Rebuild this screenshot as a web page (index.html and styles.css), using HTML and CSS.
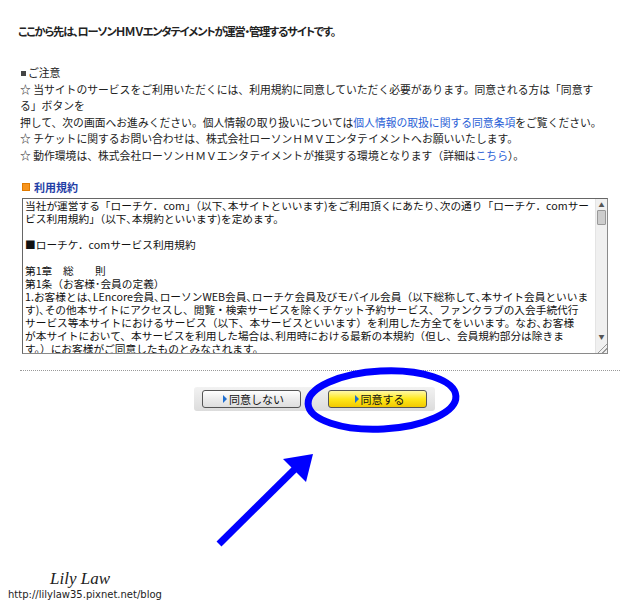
FILE: index.html
```html
<!DOCTYPE html>
<html>
  <head>
    <meta charset="utf-8">
    <title>ローチケ．com 利用規約</title>
    <link rel="stylesheet" href="styles.css">
  </head>
  <body>
    <div class="page">
      <p class="lead">ここから先は、ローソンＨＭＶエンタテイメントが運営・管理するサイトです。</p>

      <div class="notice">
        <div class="notice-title"><span class="sq"></span>ご注意</div>
        <div>☆ 当サイトのサービスをご利用いただくには、利用規約に同意していただく必要があります。同意される方は「同意す</div>
        <div>る」ボタンを</div>
        <div>押して、次の画面へお進みください。個人情報の取り扱いについては<a href="#">個人情報の取扱に関する同意条項</a>をご覧ください。</div>
        <div>☆ チケットに関するお問い合わせは、株式会社ローソンＨＭＶエンタテイメントへお願いいたします。</div>
        <div>☆ 動作環境は、株式会社ローソンＨＭＶエンタテイメントが推奨する環境となります（詳細は<a href="#">こちら</a>）。</div>
      </div>

      <h3 class="terms-title"><span class="mark"></span>利用規約</h3>

      <div class="terms-box">
        <div class="terms-text">当社が運営する「ローチケ．com」（以下､本サイトといいます)をご利用頂くにあたり､次の通り「ローチケ．comサー
ビス利用規約」（以下､本規約といいます)を定めます。

■ローチケ．comサービス利用規約

第1章　総　　則
第1条（お客様･会員の定義）
1.お客様とは､LEncore会員､ローソンWEB会員､ローチケ会員及びモバイル会員（以下総称して､本サイト会員といいま
す)､その他本サイトにアクセスし、閲覧・検索サービスを除くチケット予約サービス、ファンクラブの入会手続代行
サービス等本サイトにおけるサービス（以下、本サービスといいます）を利用した方全てをいいます。なお､お客様
が本サイトにおいて、本サービスを利用した場合は､利用時における最新の本規約（但し、会員規約部分は除きま
す。）にお客様がご同意したものとみなされます。</div>
        <div class="scrollbar">
          <span class="sb-btn">▲</span>
          <span class="sb-thumb"></span>
          <span class="sb-track"></span>
          <span class="sb-btn">▼</span>
          <span class="sb-grip"></span>
        </div>
      </div>

      <hr class="dots">

      <div class="actions">
        <div class="btn-panel">
          <button class="btn">同意しない</button>
          <button class="btn btn-agree">同意する</button>
        </div>
      </div>
    </div>

    <svg class="marks" width="640" height="613" viewBox="0 0 640 613">
      <ellipse cx="382" cy="400" rx="74" ry="29" fill="none" stroke="#0000ff" stroke-width="7" transform="rotate(-3 382 400)"/>
      <line x1="219" y1="544" x2="302" y2="462" stroke="#0000ff" stroke-width="7"/>
      <polygon points="313,454 283,459 306,482" fill="#0000ff"/>
    </svg>

    <div class="credit">
      <div class="credit-name">Lily Law</div>
      <div class="credit-url">http://lilylaw35.pixnet.net/blog</div>
    </div>
  </body>
</html>
```

FILE: styles.css
```css
:root {
  --text: #222;
  --link: #2a5fd6;
  --navy: #1f3ea6;
  --jp: "Noto Sans CJK JP", "Noto Sans", sans-serif;
}

html,
body {
  margin: 0;
  padding: 0;
  background: #fff;
}

body {
  font-family: var(--jp);
  color: var(--text);
  width: 640px;
  height: 613px;
  position: relative;
  overflow: hidden;
}

.page {
  padding: 22px 20px 0 18px;
}

.lead {
  margin: 0;
  font-size: 11.2px;
  line-height: 18px;
  font-weight: 700;
  font-feature-settings: "palt";
  letter-spacing: -1.15px;
}

.notice {
  margin-top: 24px;
  padding-left: 2px;
  font-size: 10.8px;
  line-height: 16.6px;
  white-space: nowrap;
}

.notice-title .sq {
  display: inline-block;
  width: 5px;
  height: 5px;
  background: #444;
  margin: 0 2px 1px 1px;
  vertical-align: middle;
}

.notice a {
  color: var(--link);
  text-decoration: none;
}

.terms-title {
  margin: 15px 0 0 4px;
  font-size: 11px;
  line-height: 16px;
  color: var(--navy);
  font-weight: 700;
  display: flex;
  align-items: center;
  gap: 4px;
}

.terms-title .mark {
  width: 8px;
  height: 8px;
  background: #f7941d;
  border: 1px solid #e07a00;
  box-sizing: border-box;
}

.terms-box {
  margin: 3px 0 0 4px;
  width: 586px;
  height: 156px;
  border: 1px solid #8a8a8a;
  border-top-color: #666;
  border-left-color: #666;
  box-sizing: border-box;
  display: flex;
  overflow: hidden;
}

.terms-text {
  flex: 1;
  padding: 0 0 0 2px;
  font-size: 10.7px;
  line-height: 13px;
  white-space: pre;
  overflow: hidden;
  color: #111;
}

.scrollbar {
  width: 11px;
  flex: none;
  display: flex;
  flex-direction: column;
  background: #f0f0f0;
  border-left: 1px solid #e4e4e4;
}

.sb-btn {
  height: 11px;
  font-size: 6px;
  line-height: 11px;
  text-align: center;
  color: #555;
}

.sb-thumb {
  height: 13px;
  margin: 0 1px;
  background: #cdcdcd;
  border: 1px solid #999;
  border-radius: 1px;
}

.sb-track {
  flex: 1;
}

.sb-grip {
  height: 11px;
  background: linear-gradient(135deg, transparent 55%, #999 56%, #999 62%, transparent 63%, transparent 75%, #999 76%, #999 82%, transparent 83%);
}

.dots {
  margin: 16px 0 0 2px;
  border: none;
  border-top: 1px dotted #999;
  height: 0;
}

.actions {
  margin-top: 16px;
  display: flex;
  justify-content: center;
  padding-right: 9px;
}

.btn-panel {
  display: flex;
  gap: 27px;
  padding: 3px 8px;
  border-radius: 3px;
  background: linear-gradient(#f2f2f2, #dcdcdc);
}

.btn {
  width: 99px;
  height: 18px;
  padding: 0 0 0 4px;
  border: 1px solid #555;
  border-radius: 3px;
  background: linear-gradient(#fff, #ececec 50%, #dedede);
  font-family: var(--jp);
  font-size: 11px;
  color: #111;
  display: flex;
  align-items: center;
  justify-content: center;
  gap: 2px;
}

.btn:before {
  content: "";
  border-left: 4px solid #1f6fd0;
  border-top: 4px solid transparent;
  border-bottom: 4px solid transparent;
}

.btn-agree {
  background: linear-gradient(#fff9a8, #ffe81a 50%, #f2c900);
}

.marks {
  position: absolute;
  left: 0;
  top: 0;
  pointer-events: none;
}

.credit {
  position: absolute;
  left: 8px;
  top: 569px;
  color: #222;
}

.credit-name {
  margin-left: 42px;
  font-family: "Liberation Serif", serif;
  font-style: italic;
  font-size: 17px;
  line-height: 19px;
}

.credit-url {
  font-family: "DejaVu Sans", sans-serif;
  font-size: 10px;
  line-height: 13px;
}
```
